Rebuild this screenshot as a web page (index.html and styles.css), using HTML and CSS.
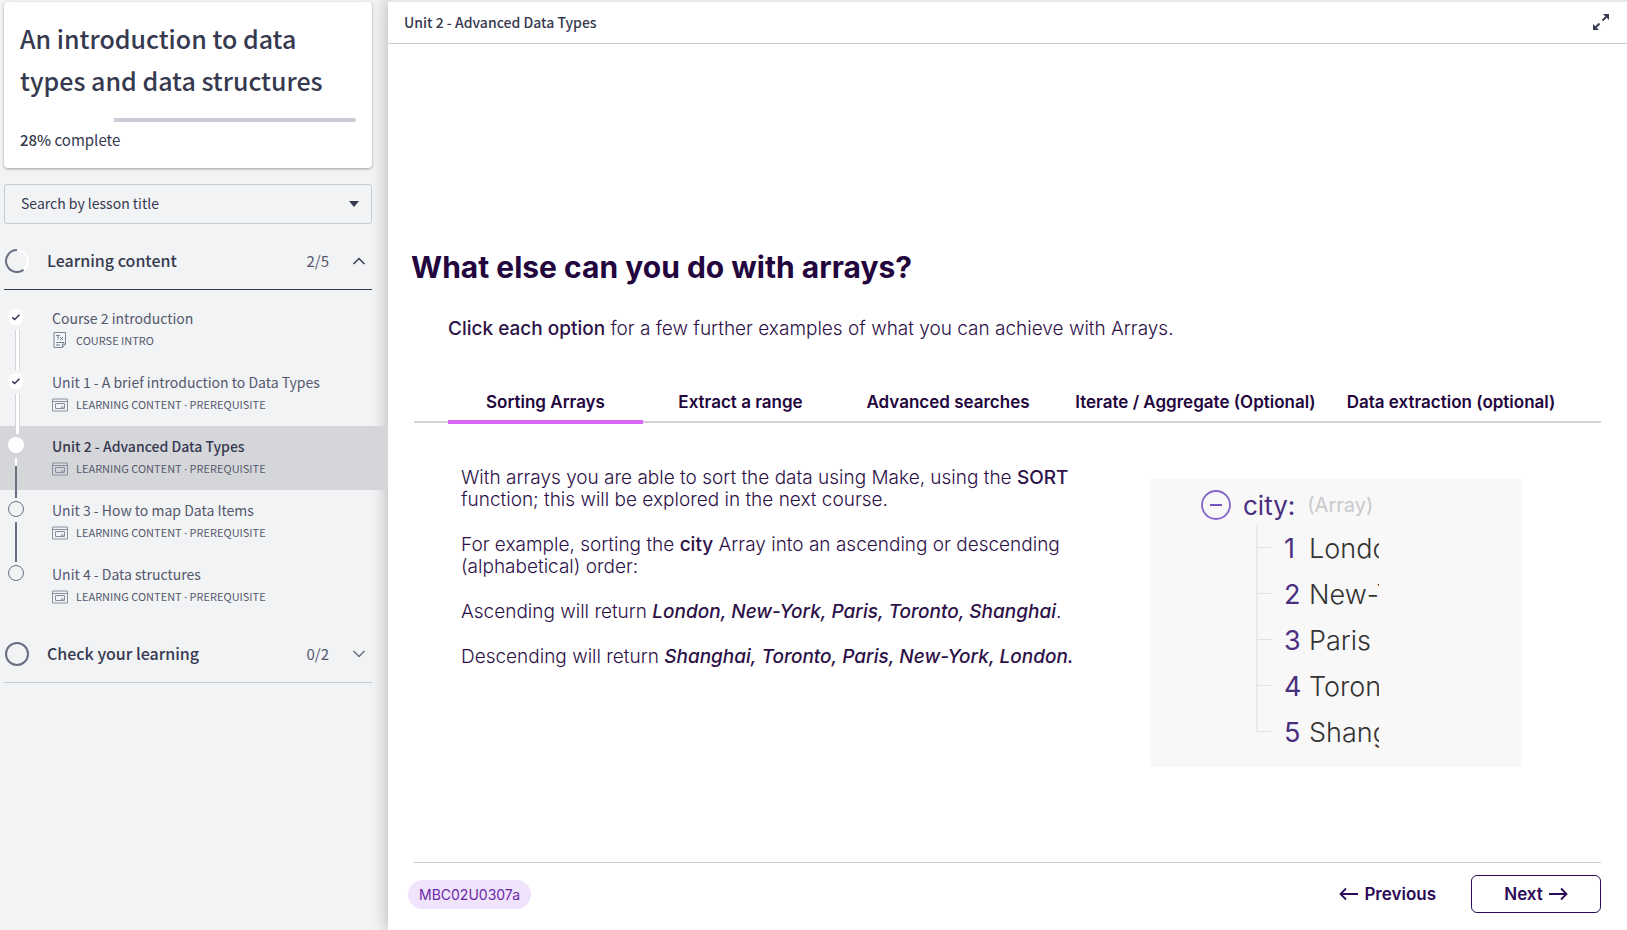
FILE: index.html
```html
<!DOCTYPE html>
<html lang="en">
<head>
<meta charset="utf-8">
<meta name="viewport" content="width=device-width, initial-scale=1">
<title>An introduction to data types and data structures</title>
<link rel="stylesheet" href="styles.css">
</head>
<body>
<svg class="sprite" aria-hidden="true">
  <symbol id="i-check" viewBox="0 0 16 16"><path d="M4.300 8.400l2.300 2.100 4.900-4.800" fill="none" stroke="#36394f" stroke-width="1.600"/></symbol>
  <symbol id="i-lesson" viewBox="0 0 16 16"><path d="M.5 2h15v12H.5zM.5 4.500h15M3.500 6.500h9v5h-9z" fill="none" stroke="#8b8e9e"/><path d="M9.500 11.500v-1.500H12.500" fill="none" stroke="#8b8e9e"/></symbol>
  <symbol id="i-doc" viewBox="0 0 16 16"><path d="M2 .5h11.500V12l-3 3.500H2z" fill="none" stroke="#7f8395"/><path d="M4 3.500h4M6 3.500v4M8 5l3 3M11 5L8 8M4 10.500h8M4 13h4M10.500 15v-3h3" fill="none" stroke="#6d8199"/></symbol>
</svg>
<div class="app">
  <aside class="sidebar">
    <section class="card">
      <h1>An introduction to data types and data structures</h1>
      <div class="progress"><div class="progress-done" style="width:28%"></div></div>
      <p class="percent"><strong>28%</strong> complete</p>
    </section>
    <div class="search">
      <select aria-label="Search by lesson title"><option>Search by lesson title</option></select>
      <svg viewBox="0 0 10 6"><path d="M0 0h10L5 6z" fill="#36394f"/></svg>
    </div>
    <button class="group open" type="button" aria-expanded="true">
      <svg class="ring" viewBox="0 0 24 24"><circle cx="12" cy="12" r="11" fill="none" stroke="#fff" stroke-width="2"/><path d="M12 1A11 11 0 1 0 18.500 20.900" fill="none" stroke="#6b6e82" stroke-width="2"/></svg>
      <span class="group-name">Learning content</span><span class="count">2/5</span>
      <svg class="chev" viewBox="0 0 12 8"><path d="M.5 7L6 1.500 11.500 7" fill="none" stroke="#36394f" stroke-width="1.500"/></svg>
    </button>
    <ul class="lessons">
      <li class="lesson done"><span class="dot"><svg viewBox="0 0 16 16"><use href="#i-check"/></svg></span><a href="#intro"><span class="name">Course 2 introduction</span><span class="meta"><svg viewBox="0 0 16 16"><use href="#i-doc"/></svg>COURSE INTRO</span></a></li>
      <li class="lesson done"><span class="dot"><svg viewBox="0 0 16 16"><use href="#i-check"/></svg></span><a href="#unit1"><span class="name">Unit 1 - A brief introduction to Data Types</span><span class="meta"><svg viewBox="0 0 16 16"><use href="#i-lesson"/></svg><span>LEARNING CONTENT <span class="sep">·</span> PREREQUISITE</span></span></a></li>
      <li class="lesson current"><span class="dot"></span><a href="#unit2" aria-current="page"><span class="name">Unit 2 - Advanced Data Types</span><span class="meta"><svg viewBox="0 0 16 16"><use href="#i-lesson"/></svg><span>LEARNING CONTENT <span class="sep">·</span> PREREQUISITE</span></span></a></li>
      <li class="lesson"><span class="dot"></span><a href="#unit3"><span class="name">Unit 3 - How to map Data Items</span><span class="meta"><svg viewBox="0 0 16 16"><use href="#i-lesson"/></svg><span>LEARNING CONTENT <span class="sep">·</span> PREREQUISITE</span></span></a></li>
      <li class="lesson"><span class="dot"></span><a href="#unit4"><span class="name">Unit 4 - Data structures</span><span class="meta"><svg viewBox="0 0 16 16"><use href="#i-lesson"/></svg><span>LEARNING CONTENT <span class="sep">·</span> PREREQUISITE</span></span></a></li>
    </ul>
    <button class="group" type="button" aria-expanded="false">
      <svg class="ring" viewBox="0 0 24 24"><circle cx="12" cy="12" r="11" fill="none" stroke="#6b6e82" stroke-width="2"/></svg>
      <span class="group-name">Check your learning</span><span class="count">0/2</span>
      <svg class="chev" viewBox="0 0 12 8"><path d="M.5 1L6 6.500 11.500 1" fill="none" stroke="#6b6e82" stroke-width="1.500"/></svg>
    </button>
  </aside>
  <main class="main">
    <header class="topbar">
      <span>Unit 2 - Advanced Data Types</span>
      <button class="expand" type="button" aria-label="Full screen"><svg viewBox="0 0 16 16"><path d="M9.500 6.500L14 2M6.500 9.500L2 14" stroke="#36394f" stroke-width="1.800"/><path d="M10 0h6v6l-2-2V2h-2zM0 10v6h6l-2-2H2v-2z" fill="#36394f"/></svg></button>
    </header>
    <article class="slide">
      <h2>What else can you do with arrays?</h2>
      <p class="lead"><strong>Click each option</strong> for a few further examples of what you can achieve with Arrays.</p>
      <div class="tabs" role="tablist">
        <button type="button" role="tab" aria-selected="true">Sorting Arrays</button>
        <button type="button" role="tab" aria-selected="false">Extract a range</button>
        <button type="button" role="tab" aria-selected="false">Advanced searches</button>
        <button type="button" role="tab" aria-selected="false">Iterate / Aggregate (Optional)</button>
        <button type="button" role="tab" aria-selected="false">Data extraction (optional)</button>
      </div>
      <div class="panel">
        <div class="copy">
          <p>With arrays you are able to sort the data using Make, using the <strong>SORT</strong><br>function; this will be explored in the next course.</p>
          <p>For example, sorting the <strong>city</strong> Array into an ascending or descending<br>(alphabetical) order:</p>
          <p>Ascending will return <strong><em>London, New-York, Paris, Toronto, Shanghai</em></strong>.</p>
          <p>Descending will return <strong><em>Shanghai, Toronto, Paris, New-York, London.</em></strong></p>
        </div>
        <div class="figure">
          <div class="figure-head">
            <svg viewBox="0 0 30 30"><circle cx="15" cy="15" r="14" fill="none" stroke="#8465cc" stroke-width="1.800"/><path d="M9 15h12" stroke="#7654c4" stroke-width="2"/></svg>
            <span class="key">city:</span><span class="type">(Array)</span>
          </div>
          <ol class="tree">
            <li><b>1</b><span>London</span></li>
            <li><b>2</b><span>New-York</span></li>
            <li><b>3</b><span>Paris</span></li>
            <li><b>4</b><span>Toronto</span></li>
            <li><b>5</b><span>Shanghai</span></li>
          </ol>
        </div>
      </div>
      <footer class="foot">
        <span class="code">MBC02U0307a</span>
        <button class="prev" type="button"><svg viewBox="0 0 20 14"><path d="M19 7H1.500M7 1.500L1.500 7 7 12.500" fill="none" stroke="#2b0a57" stroke-width="1.800"/></svg>Previous</button>
        <button class="next" type="button">Next<svg viewBox="0 0 20 14"><path d="M1 7h17.500M13 1.500L18.500 7 13 12.500" fill="none" stroke="#2b0a57" stroke-width="1.800"/></svg></button>
      </footer>
    </article>
  </main>
</div>
</body>
</html>
```
FILE: styles.css
```css
* { box-sizing: border-box; }
body {
  margin: 0;
  font-family: "Noto Sans CJK SC", "Noto Sans", sans-serif;
  color: #36394f;
  background: #f1f3f5;
}
h1, h2, p, ul, ol { margin: 0; padding: 0; }
ul, ol { list-style: none; }
button, select { font: inherit; color: inherit; background: none; border: 0; padding: 0; }
button { cursor: pointer; }
svg { display: block; flex: none; }
.sprite { position: absolute; width: 0; height: 0; }
.app { display: flex; min-height: 100vh; }

.sidebar { flex: none; width: 388px; padding-top: 2px; }
.card {
  margin: 0 16px 0 4px;
  padding: 15px 16px 17px;
  background: #fff;
  border-radius: 4px;
  box-shadow: 0 1px 3px rgba(0, 0, 0, .35);
}
.card h1 { font-size: 25px; line-height: 42px; font-weight: 500; }
.progress { height: 4px; margin-top: 17px; border-radius: 2px; background: #caccd6; }
.progress-done { height: 4px; background: #fff; }
.percent { margin-top: 7px; font-size: 15px; line-height: 22px; }
.percent strong { font-weight: 500; }
.search { position: relative; margin: 16px 16px 0 4px; }
.search select {
  display: block;
  width: 100%;
  height: 40px;
  padding: 0 16px 2px;
  appearance: none;
  border: 1px solid #c8cad6;
  border-radius: 3px;
  font-size: 14px;
}
.search svg { position: absolute; right: 13px; top: 17px; width: 10px; height: 6px; }

.group {
  display: flex;
  align-items: center;
  width: 368px;
  height: 58px;
  margin-left: 4px;
  padding-right: 7px;
  border-bottom: 1px solid #c8cad6;
  text-align: left;
}
.group.open { height: 66px; padding-top: 8px; border-color: #36394f; }
.ring { width: 24px; height: 24px; margin-left: 1px; }
.group-name { flex: 1; margin-left: 18px; padding-bottom: 2px; font-size: 16px; font-weight: 500; }
.count { font-size: 15px; color: #55586d; }
.chev { width: 12px; height: 8px; margin-left: 24px; }

.lessons { padding: 8px 0 7px; }
.lesson { position: relative; height: 64px; }
.lesson a { display: block; height: 100%; padding: 8px 0 0 52px; color: #55586d; text-decoration: none; }
.name { display: block; font-size: 14px; line-height: 24px; }
.meta { display: flex; align-items: center; gap: 8px; margin-top: 2px; font-size: 11px; line-height: 16px; }
.meta svg { width: 16px; height: 16px; }
.sep { font-family: "Noto Sans", sans-serif; }
.dot { position: absolute; left: 8px; top: 11px; width: 16px; height: 16px; border: 1px solid #6b6e82; border-radius: 50%; }
.done .dot, .current .dot { border: 0; background: #fff; }
.current { background: #d5d6da; }
.current .name { font-weight: 500; color: #36394f; }
.lesson:not(:last-child)::after {
  content: "";
  position: absolute;
  z-index: 1;
  left: 15px;
  top: 32px;
  width: 2px;
  height: 40px;
  background: #6b6e82;
}
.lesson.done::after { width: 3px; border: solid #d5d6da; border-width: 0 1px; background: #fff; }
.lesson.current::after { background: linear-gradient(#fff 8px, #6b6e82 8px); }

.main {
  flex: 1;
  min-width: 0;
  display: flex;
  flex-direction: column;
  background: #fff;
  border-top: 2px solid #e8e8e8;
  box-shadow: 0 0 16px rgba(0, 0, 0, .28);
}
.topbar {
  display: flex;
  align-items: center;
  justify-content: space-between;
  height: 42px;
  padding: 0 18px 2px 16px;
  border-bottom: 1px solid #c8cad6;
  font-size: 14px;
  font-weight: 500;
}
.expand svg { width: 16px; height: 16px; }
.slide {
  flex: 1;
  display: flex;
  flex-direction: column;
  padding: 200px 26px 17px;
  font-family: Inter, "Liberation Sans", sans-serif;
  color: #2d1148;
}
.slide h2 { margin-left: -3px; font-size: 30px; line-height: 46px; font-weight: 700; color: #22063d; }
.lead { margin: 25px 0 0 34px; font-size: 19px; line-height: 28px; font-weight: 300; }
.slide strong { font-weight: 500; }
.tabs {
  display: grid;
  grid-template-columns: 195fr 195fr 220fr 275fr 236fr;
  margin-top: 38px;
  padding: 0 32px 0 34px;
  border-bottom: 2px solid #d8d0d4;
}
.tabs button { height: 43px; margin-bottom: -3px; padding-top: 2px; font-size: 17px; font-weight: 600; color: #22063d; white-space: nowrap; border-bottom: 4px solid transparent; }
.tabs [aria-selected="true"] { border-color: #d865f5; }
.panel { display: flex; justify-content: space-between; padding: 42px 79px 0 47px; }
.copy { padding-top: 2px; font-size: 19px; line-height: 22px; font-weight: 300; }
.copy p { margin-bottom: 23px; white-space: nowrap; }
.figure { width: 372px; margin-top: 14px; padding: 6px 0 12px 51px; background: #f8f8f8; font-size: 27px; }
.figure-head { display: flex; align-items: center; height: 40px; }
.figure-head svg { width: 30px; height: 30px; }
.key { margin-left: 12px; font-size: 26px; color: #4a2f80; }
.type { margin-left: 12px; font-size: 20px; color: #c9c9cd; }
.tree { margin-left: 56px; }
.tree li { position: relative; display: flex; align-items: center; height: 46px; padding-left: 27px; }
.tree li::before { content: ""; position: absolute; left: -1px; top: 0; width: 2px; height: 46px; background: #e9e9ee; }
.tree li:last-child::before { height: 23px; }
.tree li::after { content: ""; position: absolute; left: 0; top: 22px; width: 15px; height: 1px; background: #e1e1e6; }
.tree b { width: 25px; font-weight: 400; color: #4a2f80; }
.tree span { width: 70px; overflow: hidden; white-space: nowrap; font-weight: 300; color: #333; }
.foot { display: flex; align-items: center; margin-top: auto; padding-top: 12px; border-top: 1px solid #cfc6cc; }
.code { margin: 0 auto 0 -6px; padding: 0 11px; border-radius: 15px; background: #f0e3fc; color: #6d28a8; font-size: 14px; line-height: 29px; }
.prev, .next { display: flex; align-items: center; justify-content: center; gap: 5px; height: 38px; font-size: 17px; font-weight: 600; color: #2b0a57; }
.prev { margin-right: 35px; }
.next { width: 130px; border: 1px solid #2b0a57; border-radius: 6px; }
.foot svg { width: 20px; height: 14px; }
```
